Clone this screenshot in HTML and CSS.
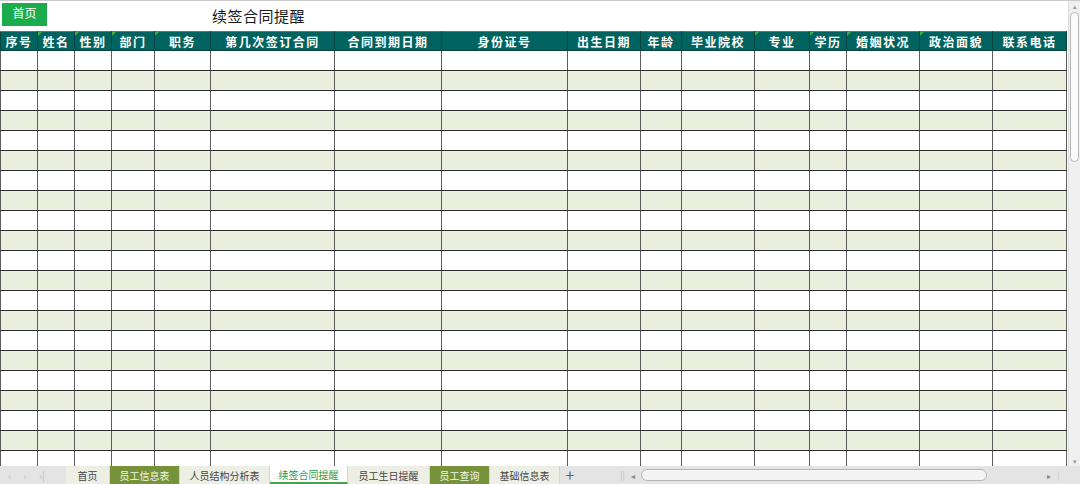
FILE: index.html
```html
<!DOCTYPE html>
<html lang="zh-CN">
<head>
    <meta charset="UTF-8">
    <title>续签合同提醒</title>
    <link rel="stylesheet" href="styles.css">
</head>
<body>
    <div class="main">
        <div class="sheet">
            <div class="topbar">
                <button class="home-btn">首页</button>
                <div class="title">续签合同提醒</div>
            </div>
            <div class="grid-wrap">
                <table class="grid">
                    <colgroup>
                        <col style="width:37px"><col style="width:37px"><col style="width:37px"><col style="width:43px">
                        <col style="width:56px"><col style="width:124px"><col style="width:107px"><col style="width:126px">
                        <col style="width:73px"><col style="width:41px"><col style="width:73px"><col style="width:55px">
                        <col style="width:37px"><col style="width:73px"><col style="width:73px"><col style="width:74px">
                    </colgroup>
                    <thead>
                        <tr>
                            <th>序号</th>
                            <th class="mark">姓名</th>
                            <th class="mark">性别</th>
                            <th class="mark">部门</th>
                            <th class="mark">职务</th>
                            <th>第几次签订合同</th>
                            <th>合同到期日期</th>
                            <th>身份证号</th>
                            <th>出生日期</th>
                            <th>年龄</th>
                            <th>毕业院校</th>
                            <th class="mark">专业</th>
                            <th class="mark">学历</th>
                            <th class="mark">婚姻状况</th>
                            <th class="mark">政治面貌</th>
                            <th>联系电话</th>
                        </tr>
                    </thead>
                    <tbody id="rows"></tbody>
                </table>
            </div>
        </div>
        <div class="vscroll">
            <div class="arrow-up">&#9652;</div>
            <div class="vthumb"></div>
            <div class="arrow-down">&#9662;</div>
        </div>
    </div>
    <div class="tabbar">
        <div class="tab-nav">
            <span>&#8249;</span><span>&#8250;</span><span>&#8250;|</span>
        </div>
        <div class="tab w44">首页</div>
        <div class="tab dark w70">员工信息表</div>
        <div class="tab w90">人员结构分析表</div>
        <div class="tab active w78">续签合同提醒</div>
        <div class="tab w82">员工生日提醒</div>
        <div class="tab dark w60">员工查询</div>
        <div class="tab w70">基础信息表</div>
        <div class="tab-add">+</div>
        <div class="hscroll">
            <span class="sep">||</span>
            <span class="harrow">&#9666;</span>
            <div class="hthumb"></div>
            <span class="harrow">&#9656;</span>
            <span class="sep">|</span>
        </div>
    </div>

    <script>
        const tbody = document.getElementById('rows');
        for (let i = 0; i < 22; i++) {
            const tr = document.createElement('tr');
            for (let j = 0; j < 16; j++) {
                tr.appendChild(document.createElement('td'));
            }
            tbody.appendChild(tr);
        }
    </script>
</body>
</html>
```

FILE: styles.css
```css
* {
    box-sizing: border-box;
}
body {
    margin: 0;
    width: 1080px;
    height: 484px;
    overflow: hidden;
    font-family: "Noto Sans CJK SC", "Noto Sans", sans-serif;
    background: #fff;
    display: flex;
    flex-direction: column;
}
.main {
    display: flex;
    height: 466px;
    flex: none;
    border-top: 1px solid #c9c9c9;
}
.sheet {
    width: 1068px;
    display: flex;
    flex-direction: column;
}
.topbar {
    height: 30px;
    display: flex;
    align-items: center;
    padding-left: 2px;
}
.home-btn {
    width: 45px;
    height: 23px;
    margin-top: -4px;
    border: none;
    background: #1aac4d;
    color: #fff;
    font-family: inherit;
    font-size: 12px;
    padding: 0 0 4px;
}
.title {
    margin-left: 165px;
    font-size: 15px;
    color: #1a1a1a;
    letter-spacing: 0.5px;
    margin-top: -2px;
}
.grid-wrap {
    flex: 1;
    overflow: hidden;
}
.grid {
    border-collapse: collapse;
    table-layout: fixed;
    width: 1067px;
}
.grid th {
    height: 19px;
    padding: 0;
    background: #00635f;
    color: #fff;
    font-size: 12px;
    font-weight: bold;
    letter-spacing: 1.5px;
    border: 1px solid #0a4441;
    border-top: 1px solid #4b7d7a;
    position: relative;
    white-space: nowrap;
    overflow: hidden;
}
.grid th.mark::before {
    content: "";
    position: absolute;
    left: 0;
    top: 0;
    border-top: 4px solid #3fae3f;
    border-right: 4px solid transparent;
}
.grid td {
    height: 20px;
    padding: 0;
    border-top: 1px solid #2e2e2e;
    border-bottom: 1px solid #2e2e2e;
    border-left: 1px solid #5c5c5c;
    border-right: 1px solid #5c5c5c;
}
.grid tbody tr:nth-child(even) td {
    background: #ebf0de;
}
.grid tbody tr:first-child td {
    border-top: none;
}
.vscroll {
    width: 12px;
    background: #f0f0f0;
    border-left: 1px solid #dcdcdc;
    position: relative;
}
.arrow-up,
.arrow-down {
    font-size: 7px;
    color: #9a9a9a;
    text-align: center;
    height: 10px;
    line-height: 10px;
}
.arrow-down {
    position: absolute;
    bottom: 0;
    width: 100%;
}
.vthumb {
    margin: 1px 1px 0 1px;
    height: 150px;
    border: 1px solid #b8b8b8;
    border-radius: 5px;
    background: #fafafa;
}
.tabbar {
    height: 18px;
    flex: none;
    display: flex;
    align-items: stretch;
    background: #e4e4e4;
    font-size: 10px;
    color: #444;
}
.tab-nav {
    flex: none;
    width: 66px;
    display: flex;
    align-items: center;
    gap: 12px;
    padding-left: 8px;
    color: #c4c4c4;
    font-size: 11px;
}
.tab {
    flex: none;
    display: flex;
    align-items: center;
    justify-content: center;
    background: #edefe4;
    border-right: 1px solid #d6d6d6;
    white-space: nowrap;
}
.w44 { width: 44px; }
.w60 { width: 60px; }
.w70 { width: 70px; }
.w78 { width: 78px; }
.w82 { width: 82px; }
.w90 { width: 90px; }
.tab.dark {
    background: #76923b;
    color: #f3f6ea;
}
.tab.active {
    background: #fff;
    color: #2f9a48;
    border-bottom: 2px solid #46a34a;
}
.tab-add {
    flex: none;
    width: 20px;
    text-align: center;
    font-size: 16px;
    line-height: 17px;
    color: #666;
}
.hscroll {
    flex: 1;
    display: flex;
    align-items: center;
    padding-left: 40px;
    padding-right: 14px;
    color: #b0b0b0;
}
.hscroll .sep {
    font-size: 9px;
    color: #c0c0c0;
}
.harrow {
    font-size: 8px;
    color: #888;
    margin: 0 6px;
}
.hthumb {
    width: 346px;
    height: 12px;
    border: 1px solid #b5b5b5;
    border-radius: 6px;
    background: #f4f4f4;
    margin-right: 54px;
}
```
